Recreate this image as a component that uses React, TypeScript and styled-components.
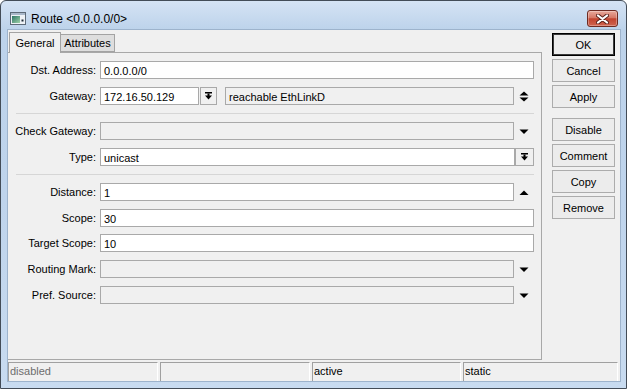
import React from "react";
import styled, { createGlobalStyle } from "styled-components";

const GlobalStyle = createGlobalStyle`
  html, body { margin: 0; padding: 0; background: #ffffff; }
  * { box-sizing: border-box; }
  body { font-family: "Liberation Sans", Arial, sans-serif; font-size: 11px; color: #000; }
`;

const Window = styled.div`
  width: 627px;
  height: 389px;
  border: 1px solid #434c57;
  border-radius: 6px 6px 0 0;
  background: linear-gradient(to bottom, #d5e3f4 0px, #bdd3eb 28px, #bfd4ec 200px, #c8dbf0 100%);
  display: flex;
  flex-direction: column;
  overflow: hidden;
`;

const TitleBar = styled.div`
  height: 28px;
  flex: none;
  display: flex;
  align-items: center;
  padding: 7px 0 0 9px;
`;

const TitleText = styled.span`
  font-family: "Liberation Sans", Arial, sans-serif;
  font-size: 12px;
  margin-left: 5px;
  color: #000;
`;

const CloseButton = styled.div`
  margin-left: auto;
  margin-right: 8px;
  align-self: flex-start;
  margin-top: 2px;
  width: 31px;
  height: 17px;
  border: 1px solid #6e2b22;
  border-radius: 3px;
  background: linear-gradient(to bottom, #e8a99b 0%, #d67866 45%, #c2432e 52%, #cf6450 100%);
  box-shadow: inset 0 0 0 1px rgba(255, 255, 255, 0.3);
  display: flex;
  align-items: center;
  justify-content: center;
`;

const FrameBody = styled.div`
  flex: 1;
  display: flex;
  padding: 0 5px 6px 6px;
`;

const Client = styled.div`
  flex: 1;
  border: 1px solid #9db3cc;
  background: #f0f0f0;
  display: flex;
  flex-direction: column;
`;

const Main = styled.div`
  height: 330px;
  display: flex;
  gap: 10px;
  padding-right: 5px;
`;

const LeftArea = styled.div`
  width: 534px;
  display: flex;
  flex-direction: column;
`;

const TabStrip = styled.div`
  height: 22px;
  display: flex;
  align-items: flex-end;
  padding-left: 1px;
`;

const Tab = styled.div<{ $active?: boolean; $w: number }>`
  width: ${(p) => p.$w}px;
  height: ${(p) => (p.$active ? 21 : 18)}px;
  margin-bottom: ${(p) => (p.$active ? -1 : 0)}px;
  position: relative;
  z-index: ${(p) => (p.$active ? 2 : 1)};
  border: 1px solid #a3a3a3;
  border-bottom: ${(p) => (p.$active ? "none" : "1px solid #a3a3a3")};
  border-left: ${(p) => (p.$active ? "1px solid #a3a3a3" : "none")};
  background: ${(p) => (p.$active ? "#f0f0f0" : "#dedede")};
  display: flex;
  align-items: center;
  justify-content: center;
  padding-bottom: ${(p) => (p.$active ? 1 : 0)}px;
  white-space: nowrap;
`;

const Panel = styled.div`
  height: 308px;
  border: 1px solid #a8a8a8;
  border-left: none;
  padding: 8px 7px 0 0;
  display: flex;
  flex-direction: column;
  gap: 8px;
`;

const Row = styled.div<{ $pull?: boolean }>`
  display: grid;
  grid-template-columns: 88px 1fr;
  column-gap: 4px;
  align-items: center;
  height: 18px;
  margin-top: ${(p) => (p.$pull ? -1 : 0)}px;
`;

const Label = styled.span`
  text-align: right;
  white-space: nowrap;
`;

const Fields = styled.div`
  display: flex;
  align-items: stretch;
  height: 18px;
`;

const TextBox = styled.div<{ $disabled?: boolean; $w?: number; $ml?: number }>`
  ${(p) => (p.$w ? `width: ${p.$w}px; flex: none;` : "flex: 1;")}
  margin-left: ${(p) => p.$ml ?? 0}px;
  height: 18px;
  border: 1px solid #a9a9a9;
  background: ${(p) => (p.$disabled ? "#f0f0f0" : "#ffffff")};
  padding: 1px 3px 0 3px;
  line-height: 16px;
  white-space: nowrap;
  overflow: hidden;
`;

const DropButton = styled.div<{ $w: number; $ml?: number }>`
  width: ${(p) => p.$w}px;
  flex: none;
  margin-left: ${(p) => p.$ml ?? 0}px;
  height: 18px;
  border: 1px solid #a9a9a9;
  background: #f0f0f0;
  display: flex;
  align-items: center;
  justify-content: center;
`;

const IconSlot = styled.div`
  width: 20px;
  flex: none;
  display: flex;
  align-items: center;
  justify-content: center;
`;

const Separator = styled.div`
  height: 1px;
  margin-left: 8px;
  background: #d6d6d6;
`;

const ButtonColumn = styled.div`
  width: 63px;
  padding-top: 3px;
  display: flex;
  flex-direction: column;
  gap: 3px;
`;

const DialogButton = styled.div<{ $default?: boolean; $spaceAfter?: boolean }>`
  height: 23px;
  flex: none;
  border: 1px solid ${(p) => (p.$default ? "#000000" : "#acacac")};
  box-shadow: ${(p) => (p.$default ? "inset 0 0 0 1px #3a3a3a" : "none")};
  background: #ececec;
  display: flex;
  align-items: center;
  justify-content: center;
  margin-bottom: ${(p) => (p.$spaceAfter ? 7 : 0)}px;
`;

const StatusBar = styled.div`
  margin-top: 2px;
  height: 19px;
  display: flex;
  gap: 2px;
  padding-right: 2px;
`;

const StatusCell = styled.div<{ $w?: number; $muted?: boolean }>`
  ${(p) => (p.$w ? `width: ${p.$w}px; flex: none;` : "flex: 1;")}
  border-top: 1px solid #a0a0a0;
  border-left: 1px solid #a0a0a0;
  border-right: 1px solid #ffffff;
  padding-left: 1px;
  line-height: 17px;
  color: ${(p) => (p.$muted ? "#6d6d6d" : "#000")};
  white-space: nowrap;
`;

const ArrowBarIcon = () => (
  <svg width="7" height="8" viewBox="0 0 7 8">
    <rect x="0" y="0" width="7" height="1.5" fill="#000" />
    <rect x="2.5" y="1.5" width="2" height="2.5" fill="#000" />
    <path d="M0 3.5H7L3.5 7.5Z" fill="#000" />
  </svg>
);

const UpDownIcon = () => (
  <svg width="10" height="11" viewBox="0 0 10 11">
    <path d="M0.5 4.5L5 0.5L9.5 4.5Z M0.5 6.5H9.5L5 10.5Z" fill="#000" />
  </svg>
);

const DownIcon = () => (
  <svg width="10" height="5" viewBox="0 0 10 5">
    <path d="M0.5 0.5H9.5L5 5Z" fill="#000" />
  </svg>
);

const UpIcon = () => (
  <svg width="10" height="5" viewBox="0 0 10 5">
    <path d="M0.5 5L5 0.5L9.5 5Z" fill="#000" />
  </svg>
);

const WindowIcon = () => (
  <svg width="16" height="13" viewBox="0 0 16 13">
    <defs>
      <linearGradient id="wg" x1="0" y1="0" x2="1" y2="1">
        <stop offset="0" stopColor="#2c7466" />
        <stop offset="1" stopColor="#9fd2a8" />
      </linearGradient>
    </defs>
    <rect x="0.5" y="0.5" width="15" height="12" fill="#eef2f6" stroke="#5d6a78" />
    <rect x="1" y="1" width="14" height="2" fill="#a9b8ca" />
    <rect x="2" y="4" width="8" height="7" fill="url(#wg)" />
    <rect x="11.5" y="7.5" width="2" height="2" fill="#1d2a36" />
  </svg>
);

const CloseGlyph = () => (
  <svg width="13" height="10" viewBox="0 0 13 10">
    <path d="M2 1.5L11 8.5M11 1.5L2 8.5" stroke="#5b231c" strokeWidth="4" strokeLinecap="round" />
    <path d="M2 1.5L11 8.5M11 1.5L2 8.5" stroke="#ffffff" strokeWidth="2.2" strokeLinecap="round" />
  </svg>
);

export default function App() {
  return (
    <>
      <GlobalStyle />
      <Window>
        <TitleBar>
          <WindowIcon />
          <TitleText>Route &lt;0.0.0.0/0&gt;</TitleText>
          <CloseButton>
            <CloseGlyph />
          </CloseButton>
        </TitleBar>
        <FrameBody>
          <Client>
            <Main>
              <LeftArea>
                <TabStrip>
                  <Tab $active $w={52}>General</Tab>
                  <Tab $w={54}>Attributes</Tab>
                </TabStrip>
                <Panel>
                  <Row>
                    <Label>Dst. Address:</Label>
                    <Fields>
                      <TextBox>0.0.0.0/0</TextBox>
                    </Fields>
                  </Row>
                  <Row>
                    <Label>Gateway:</Label>
                    <Fields>
                      <TextBox $w={99}>172.16.50.129</TextBox>
                      <DropButton $w={17} $ml={1}>
                        <ArrowBarIcon />
                      </DropButton>
                      <TextBox $disabled $ml={8}>reachable EthLinkD</TextBox>
                      <IconSlot>
                        <UpDownIcon />
                      </IconSlot>
                    </Fields>
                  </Row>
                  <Separator />
                  <Row>
                    <Label>Check Gateway:</Label>
                    <Fields>
                      <TextBox $disabled />
                      <IconSlot>
                        <DownIcon />
                      </IconSlot>
                    </Fields>
                  </Row>
                  <Row>
                    <Label>Type:</Label>
                    <Fields>
                      <TextBox>unicast</TextBox>
                      <DropButton $w={19}>
                        <ArrowBarIcon />
                      </DropButton>
                    </Fields>
                  </Row>
                  <Separator />
                  <Row>
                    <Label>Distance:</Label>
                    <Fields>
                      <TextBox>1</TextBox>
                      <IconSlot>
                        <UpIcon />
                      </IconSlot>
                    </Fields>
                  </Row>
                  <Row>
                    <Label>Scope:</Label>
                    <Fields>
                      <TextBox>30</TextBox>
                    </Fields>
                  </Row>
                  <Row $pull>
                    <Label>Target Scope:</Label>
                    <Fields>
                      <TextBox>10</TextBox>
                    </Fields>
                  </Row>
                  <Row>
                    <Label>Routing Mark:</Label>
                    <Fields>
                      <TextBox $disabled />
                      <IconSlot>
                        <DownIcon />
                      </IconSlot>
                    </Fields>
                  </Row>
                  <Row>
                    <Label>Pref. Source:</Label>
                    <Fields>
                      <TextBox $disabled />
                      <IconSlot>
                        <DownIcon />
                      </IconSlot>
                    </Fields>
                  </Row>
                </Panel>
              </LeftArea>
              <ButtonColumn>
                <DialogButton $default>OK</DialogButton>
                <DialogButton>Cancel</DialogButton>
                <DialogButton $spaceAfter>Apply</DialogButton>
                <DialogButton>Disable</DialogButton>
                <DialogButton>Comment</DialogButton>
                <DialogButton>Copy</DialogButton>
                <DialogButton>Remove</DialogButton>
              </ButtonColumn>
            </Main>
            <StatusBar>
              <StatusCell $w={150} $muted>disabled</StatusCell>
              <StatusCell $w={150}></StatusCell>
              <StatusCell $w={149}>active</StatusCell>
              <StatusCell>static</StatusCell>
            </StatusBar>
          </Client>
        </FrameBody>
      </Window>
    </>
  );
}
